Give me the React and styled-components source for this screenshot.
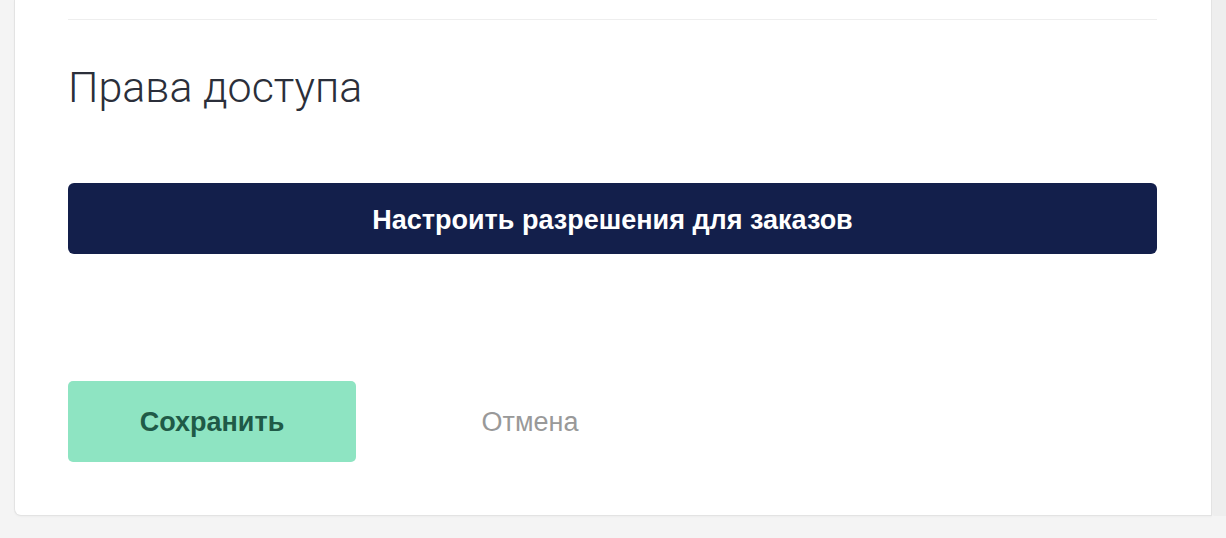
import React from "react";
import styled, { createGlobalStyle } from "styled-components";

const Global = createGlobalStyle`
  html, body { margin: 0; padding: 0; background: #f4f4f4; }
  body { font-family: "Liberation Sans", Arial, sans-serif; }
  * { box-sizing: border-box; }
`;

const Page = styled.div`
  display: flex;
  align-items: flex-start;
  padding-left: 14px;
  height: 538px;
  overflow: hidden;
`;

const Card = styled.section`
  flex: 0 0 1198px;
  background: #ffffff;
  border: 1px solid #e3e3e3;
  border-top: none;
  border-radius: 0 0 0 7px;
  box-shadow: 0 1px 2px rgba(0, 0, 0, 0.03);
  padding: 19px 54px 53px 53px;
  display: flex;
  flex-direction: column;
`;

const SideTrack = styled.div`
  flex: 0 0 14px;
  height: 516px;
  background: #eeeeee;
  border-bottom-left-radius: 3px;
`;

const Divider = styled.hr`
  margin: 0;
  border: none;
  height: 1px;
  background: #eeeeee;
`;

const Heading = styled.h2`
  margin: 41px 0 0;
  font-family: Roboto, "Noto Sans", sans-serif;
  font-weight: 300;
  font-size: 43px;
  line-height: 52px;
  color: #2b2f3a;
  letter-spacing: 0;
`;

const WideButton = styled.button`
  margin-top: 70px;
  height: 71px;
  width: 100%;
  border: none;
  border-radius: 6px;
  background: #131f4b;
  color: #ffffff;
  font-family: "Liberation Sans", Arial, sans-serif;
  font-weight: 700;
  font-size: 27px;
  display: flex;
  align-items: center;
  justify-content: center;
  padding: 4px 0 0;
  cursor: pointer;
`;

const Actions = styled.div`
  margin-top: 127px;
  display: flex;
  gap: 30px;
`;

const ActionButton = styled.button`
  width: 288px;
  height: 81px;
  border: none;
  border-radius: 5px;
  font-family: "Liberation Sans", Arial, sans-serif;
  font-size: 27px;
  display: flex;
  align-items: center;
  justify-content: center;
  padding: 2px 0 0;
  cursor: pointer;
  background: ${(p) => (p.$primary ? "#8ee4c2" : "transparent")};
  color: ${(p) => (p.$primary ? "#1f5a47" : "#999999")};
  font-weight: ${(p) => (p.$primary ? 700 : 400)};
`;

export default function App() {
  return (
    <>
      <Global />
      <Page>
        <Card>
          <Divider />
          <Heading>Права доступа</Heading>
          <WideButton>Настроить разрешения для заказов</WideButton>
          <Actions>
            <ActionButton $primary>Сохранить</ActionButton>
            <ActionButton>Отмена</ActionButton>
          </Actions>
        </Card>
        <SideTrack />
      </Page>
    </>
  );
}
